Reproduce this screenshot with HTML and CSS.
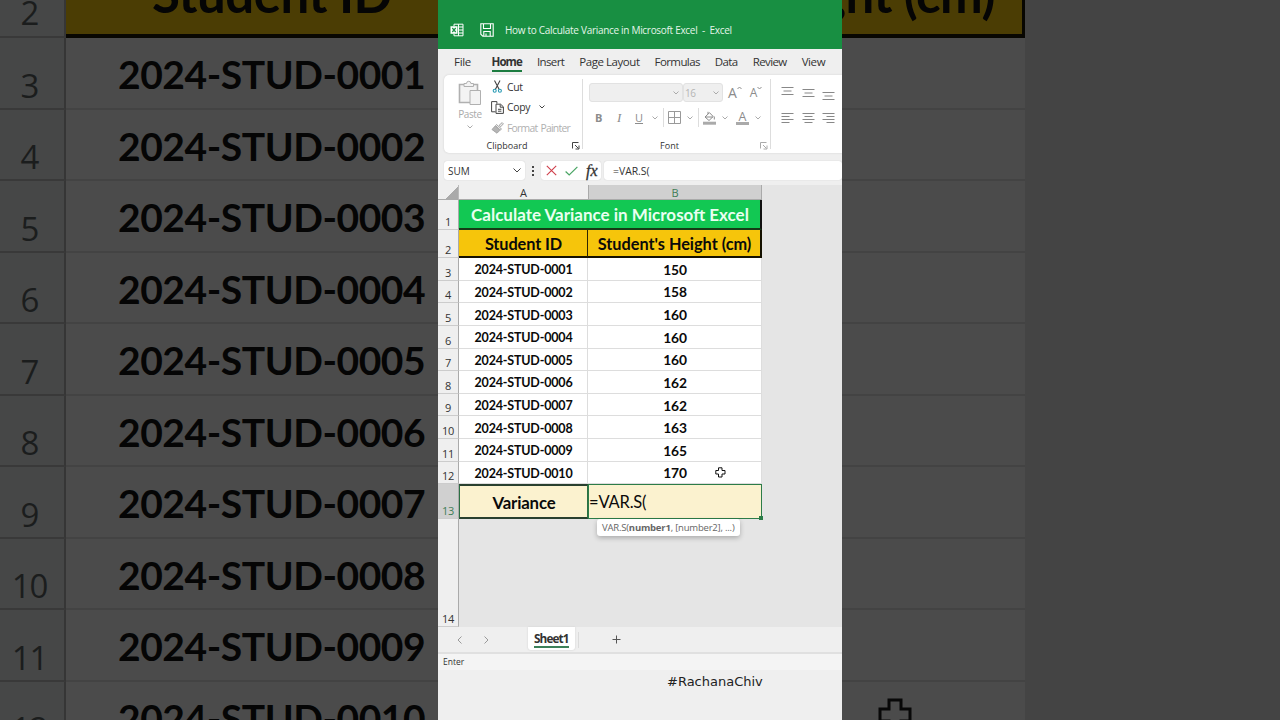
FILE: index.html
```
<!DOCTYPE html>
<html lang="en">
<head>
    <meta charset="UTF-8">
    <meta name="viewport" content="width=device-width, initial-scale=1.0">
    <title>How to Calculate Variance in Microsoft Excel</title>
    <link rel="stylesheet" href="styles.css">
</head>
<body>
    <div class="stage">
        <!-- enlarged sheet, left side -->
        <div class="side side-left">
            <div class="big-num big-first">2</div><div class="big-cell big-head"><span>Student ID</span></div>
            <div class="big-num">3</div><div class="big-cell">2024-STUD-0001</div>
            <div class="big-num">4</div><div class="big-cell">2024-STUD-0002</div>
            <div class="big-num">5</div><div class="big-cell">2024-STUD-0003</div>
            <div class="big-num">6</div><div class="big-cell">2024-STUD-0004</div>
            <div class="big-num">7</div><div class="big-cell">2024-STUD-0005</div>
            <div class="big-num">8</div><div class="big-cell">2024-STUD-0006</div>
            <div class="big-num">9</div><div class="big-cell">2024-STUD-0007</div>
            <div class="big-num">10</div><div class="big-cell">2024-STUD-0008</div>
            <div class="big-num">11</div><div class="big-cell">2024-STUD-0009</div>
            <div class="big-num">12</div><div class="big-cell">2024-STUD-0010</div>
        </div>

        <main class="phone">
            <header class="titlebar">
                <svg class="ico-excel" width="14" height="14" viewBox="0 0 14 14" fill="none" stroke="#fff">
                    <path d="M4 3V1.2h9v11.6H4V11M8.500 1.200v11.600M8.500 4h4.500M8.500 7h4.500M8.500 10h4.500"/>
                    <path d="M.5 3.200h7v7.600h-7z" fill="#fff" stroke="none"/>
                    <path d="M2.300 5l3.400 4M5.700 5L2.300 9" stroke="#188f42" stroke-width="1.200"/>
                </svg>
                <svg class="ico-save" width="14" height="14" viewBox="0 0 14 14" fill="none" stroke="#fff" stroke-width="1.100">
                    <path d="M.8.800h12.400v12.400H2.800l-2-2zM3.500.800v4.700h7V.800M3.800 13V8.500h6.400V13M6 10.500V13"/>
                </svg>
                <span class="doc-name">How to Calculate Variance in Microsoft Excel&nbsp; -&nbsp; Excel</span>
            </header>

            <nav class="menu">
                <span class="m-file">File</span>
                <span class="m-home active">Home</span>
                <span class="m-insert">Insert</span>
                <span class="m-layout">Page Layout</span>
                <span class="m-formulas">Formulas</span>
                <span class="m-data">Data</span>
                <span class="m-review">Review</span>
                <span class="m-view">View</span>
            </nav>

            <section class="ribbon">
                <div class="group clipboard">
                    <div class="group-body">
                        <div class="paste">
                            <svg width="24" height="26" viewBox="0 0 24 26" fill="#f3f3f3" stroke="#b0b0b0">
                                <path d="M1.500 4.500h18v18h-18z" stroke-width="1.600"/>
                                <path d="M6 6.500V3.500h2.500a2.200 2.200 0 0 1 4.400 0h2.600v3z"/>
                                <path d="M12 10.500h10.500v14H12z"/>
                            </svg>
                            <span>Paste</span>
                            <svg class="chev" width="6" height="4" viewBox="0 0 6 4"><path d="M.5.500L3 3 5.500.500"/></svg>
                        </div>
                        <div class="clip-list">
                            <div class="clip-row">
                                <svg width="13" height="13" viewBox="0 0 13 13" fill="none">
                                    <path d="M3.500.500l4.700 9M9 .500L4.300 9.500" stroke="#444" stroke-width="1.100"/>
                                    <circle cx="3.700" cy="10.800" r="1.500" stroke="#2a9bb5" stroke-width="1.100"/>
                                    <circle cx="8.900" cy="10.800" r="1.500" stroke="#2a9bb5" stroke-width="1.100"/>
                                </svg>
                                <span>Cut</span>
                            </div>
                            <div class="clip-row">
                                <svg width="13" height="13" viewBox="0 0 13 13" fill="none" stroke="#444">
                                    <path d="M4.500 10.800H.6V.600h5.300v2"/>
                                    <path d="M5 3.200h4.600l2.800 2.600v6.600H5zM9.200 3.500v2.700h3M7 8.300h3.400M7 10.200h3.400"/>
                                </svg>
                                <span>Copy</span>
                                <svg class="chev dark" width="6" height="4" viewBox="0 0 6 4"><path d="M.5.500L3 3 5.500.500"/></svg>
                            </div>
                            <div class="clip-row off">
                                <svg width="13" height="12" viewBox="0 0 13 12" fill="#b5b5b5" stroke="#a5a5a5">
                                    <path d="M8.200 3.200L11.200.600l1.200 1.200-2.800 3z" fill="#eee"/>
                                    <path d="M5.500 2.500l5 4.500-1.300 1-4.700-4.400z" fill="#eee"/>
                                    <path d="M4.200 4l4.700 4.300L6 11.200 1 7.500z"/>
                                </svg>
                                <span>Format Painter</span>
                            </div>
                        </div>
                    </div>
                    <div class="group-name">Clipboard
                        <svg class="launcher" width="8" height="8" viewBox="0 0 8 8"><path d="M.5 6.500v-6h6M3 3l3.500 3.500M7 3.500V7H3.500"/></svg>
                    </div>
                </div>

                <div class="group font">
                    <div class="font-row">
                        <span class="combo name"><svg class="chev" width="6" height="4" viewBox="0 0 6 4"><path d="M.5.500L3 3 5.500.500"/></svg></span>
                        <span class="combo size">16<svg class="chev" width="6" height="4" viewBox="0 0 6 4"><path d="M.5.500L3 3 5.500.500"/></svg></span>
                        <span class="grow">A<svg width="5" height="4" viewBox="0 0 5 4"><path d="M.5 3L2.500 1l2 2"/></svg></span>
                        <span class="grow shrink">A<svg width="5" height="4" viewBox="0 0 5 4"><path d="M.5 1l2 2 2-2"/></svg></span>
                    </div>
                    <div class="font-row tools">
                        <b>B</b><i>I</i><u>U</u>
                        <svg class="chev" width="6" height="4" viewBox="0 0 6 4"><path d="M.5.500L3 3 5.500.500"/></svg>
                        <span class="sep"></span>
                        <svg class="borders" width="13" height="13" viewBox="0 0 13 13" fill="none" stroke="#999"><path d="M.5.500h12v12H.5zM6.500.500v12M.5 6.500h12"/></svg>
                        <svg class="chev" width="6" height="4" viewBox="0 0 6 4"><path d="M.5.500L3 3 5.500.500"/></svg>
                        <span class="sep"></span>
                        <svg class="fill" width="13" height="14" viewBox="0 0 13 14" fill="none" stroke="#8c8c8c">
                            <path d="M2 6l4.500-4.300 3.700 3.800L6 9.500zM5 3V.800M2.500 6h7.300M11.300 5.500v3"/>
                            <path d="M0 12.200h13" stroke="#aaa" stroke-width="3"/>
                        </svg>
                        <svg class="chev" width="6" height="4" viewBox="0 0 6 4"><path d="M.5.500L3 3 5.500.500"/></svg>
                        <span class="font-color">A</span>
                        <svg class="chev" width="6" height="4" viewBox="0 0 6 4"><path d="M.5.500L3 3 5.500.500"/></svg>
                    </div>
                    <div class="group-name">Font
                        <svg class="launcher off" width="8" height="8" viewBox="0 0 8 8"><path d="M.5 6.500v-6h6M3 3l3.500 3.500M7 3.500V7H3.500"/></svg>
                    </div>
                </div>

                <div class="group align">
                    <svg width="13" height="14" viewBox="0 0 13 14"><path d="M.5 1.500h12M2.500 5h8M.5 8.500h12"/></svg>
                    <svg width="13" height="14" viewBox="0 0 13 14"><path d="M.5 3.500h12M2.500 7h8M.5 10.500h12"/></svg>
                    <svg width="13" height="14" viewBox="0 0 13 14"><path d="M.5 6.500h12M2.500 10h8M.5 13.500h12"/></svg>
                    <svg width="13" height="14" viewBox="0 0 13 14"><path d="M.5 1.500h12M.5 4.500h8M.5 7.500h12M.5 10.500h8"/></svg>
                    <svg width="13" height="14" viewBox="0 0 13 14"><path d="M.5 1.500h12M2.500 4.500h8M.5 7.500h12M2.500 10.500h8"/></svg>
                    <svg width="13" height="14" viewBox="0 0 13 14"><path d="M.5 1.500h12M4.500 4.500h8M.5 7.500h12M4.500 10.500h8"/></svg>
                </div>
            </section>

            <section class="formula-bar">
                <div class="name-box">SUM<svg class="chev dark" width="8" height="5" viewBox="0 0 8 5"><path d="M.5.500L4 4 7.500.500"/></svg></div>
                <div class="dots"><i></i><i></i><i></i></div>
                <div class="fx-box">
                    <svg width="11" height="11" viewBox="0 0 11 11" fill="none" stroke="#cf3f4b" stroke-width="1.100"><path d="M.8.800l9.400 9.400M10.200.800L.8 10.200"/></svg>
                    <svg width="13" height="10" viewBox="0 0 13 10" fill="none" stroke="#4aa564" stroke-width="1.200"><path d="M.6 5.500l3.600 3.500L12.400.800"/></svg>
                    <em>fx</em>
                </div>
                <div class="formula">=VAR.S(</div>
            </section>

            <section class="sheet">
                <div class="corner"></div><div class="col">A</div><div class="col selected">B</div>
                <div class="num">1</div><div class="cell title">Calculate Variance in Microsoft Excel</div>
                <div class="num">2</div><div class="cell head">Student ID</div><div class="cell head last">Student's Height (cm)</div>
                <div class="num">3</div><div class="cell">2024-STUD-0001</div><div class="cell val">150</div>
                <div class="num">4</div><div class="cell">2024-STUD-0002</div><div class="cell val">158</div>
                <div class="num">5</div><div class="cell">2024-STUD-0003</div><div class="cell val">160</div>
                <div class="num">6</div><div class="cell">2024-STUD-0004</div><div class="cell val">160</div>
                <div class="num">7</div><div class="cell">2024-STUD-0005</div><div class="cell val">160</div>
                <div class="num">8</div><div class="cell">2024-STUD-0006</div><div class="cell val">162</div>
                <div class="num">9</div><div class="cell">2024-STUD-0007</div><div class="cell val">162</div>
                <div class="num">10</div><div class="cell">2024-STUD-0008</div><div class="cell val">163</div>
                <div class="num">11</div><div class="cell">2024-STUD-0009</div><div class="cell val">165</div>
                <div class="num">12</div><div class="cell">2024-STUD-0010</div><div class="cell val">170
                    <svg class="cursor" width="11" height="11" viewBox="0 0 11 11"><path d="M3.500.800h3.500v2.700h3v3.500H7v3H3.500V7H.8V3.500h2.700z"/></svg>
                </div>
                <div class="num selected">13</div><div class="cell variance">Variance</div>
                <div class="cell editing">=VAR.S(
                    <div class="hint">VAR.S(<b>number1</b>, [number2], ...)</div>
                </div>
                <div class="num">14</div>
            </section>

            <footer class="tabs">
                <svg class="arrow" width="5" height="8" viewBox="0 0 5 8"><path d="M4.500.500L1 4l3.500 3.500"/></svg>
                <svg class="arrow" width="5" height="8" viewBox="0 0 5 8"><path d="M.5.500L4 4 .5 7.500"/></svg>
                <div class="tab"><span>Sheet1</span></div>
                <div class="tab-sep"></div>
                <svg class="plus" width="9" height="9" viewBox="0 0 9 9"><path d="M4.500.500v8M.5 4.500h8"/></svg>
            </footer>
            <div class="status">Enter</div>
            <div class="tag">#RachanaChiv</div>
        </main>

        <!-- enlarged sheet, right side -->
        <div class="side side-right">
            <div class="big-cell big-head"><span>Height (cm)</span></div>
            <div class="big-cell"></div>
            <div class="big-cell"></div>
            <div class="big-cell"></div>
            <div class="big-cell"></div>
            <div class="big-cell"></div>
            <div class="big-cell"></div>
            <div class="big-cell"></div>
            <div class="big-cell"></div>
            <div class="big-cell"></div>
            <div class="big-cell">
                <svg class="big-cursor" width="34" height="34" viewBox="0 0 34 34"><path d="M11 2h12v9h9v12h-9v9H11v-9H2V11h9z"/></svg>
            </div>
        </div>
    </div>
</body>
</html>
```
FILE: styles.css
```
* {
    box-sizing: border-box;
}
body {
    margin: 0;
    background: #454545;
    font-family: "Open Sans", "Noto Sans", sans-serif;
}
svg {
    display: block;
    flex-shrink: 0;
}
.stage {
    display: flex;
    width: 1280px;
    height: 720px;
    overflow: hidden;
}

/* dimmed sides */
.side {
    width: 438px;
    height: 720px;
    overflow: hidden;
    display: grid;
    grid-template-rows: 38px repeat(10, 71.5px);
    font-family: Lato, sans-serif;
    color: #050505;
}
.side-left {
    grid-template-columns: 66px 372px;
}
.side-right {
    grid-template-columns: 183px;
    background: #444;
}
.big-num {
    display: flex;
    align-items: flex-end;
    justify-content: center;
    padding: 0 5px 2px 0;
    overflow: hidden;
    background: #464747;
    border-right: 2px solid #363636;
    border-bottom: 2px solid #393939;
    color: #1b1d1d;
    font-family: "Open Sans", sans-serif;
    font-size: 33px;
    line-height: 40px;
    letter-spacing: -1px;
}
.big-num.big-first {
    padding-bottom: 3px;
}
.big-cell {
    display: flex;
    align-items: center;
    padding: 3px 0 0 52px;
    overflow: hidden;
    background: #4b4b4b;
    border-bottom: 2px solid #434343;
    font-size: 39px;
    font-weight: bold;
    letter-spacing: -0.45px;
    white-space: nowrap;
}
.big-cell.big-head {
    align-items: flex-end;
    padding: 0 0 18px 86px;
    background: #4b3d04;
    border-bottom: 4px solid #080702;
    font-size: 51px;
    line-height: 44px;
}
.side-right .big-head {
    justify-content: flex-end;
    padding: 0 27px 18px 0;
    border-right: 3px solid #080702;
}
.side-right .big-cell:last-child {
    align-items: flex-start;
    padding: 16px 0 0 36px;
}
.big-cursor path {
    fill: #4b4b4b;
    stroke: #080808;
    stroke-width: 3;
}

.phone {
    width: 404px;
    height: 720px;
    display: flex;
    flex-direction: column;
    overflow: hidden;
    background: #efefef;
    color: #333;
}
.titlebar {
    height: 49px;
    display: flex;
    align-items: center;
    padding: 11px 0 0 12px;
    background: #188f42;
    color: #e4f5e9;
    font-size: 10px;
}
.ico-save {
    margin: 0 11px 0 16px;
}
.doc-name {
    letter-spacing: -0.3px;
    white-space: nowrap;
}
.menu {
    height: 26px;
    display: flex;
    align-items: flex-start;
    gap: 15px;
    padding: 3px 0 0 16px;
    font-size: 11.5px;
    line-height: 19px;
    letter-spacing: -0.6px;
    white-space: nowrap;
}
.menu .m-file {
    margin-right: 5.5px;
    letter-spacing: -0.3px;
}
.menu .active {
    height: 20px;
    border-bottom: 2px solid #1c7c40;
    font-weight: bold;
    letter-spacing: -0.9px;
}
.menu .m-layout {
    letter-spacing: -0.45px;
}
.menu .m-view {
    letter-spacing: -0.4px;
}

/* ribbon */
.ribbon {
    height: 78px;
    display: flex;
    margin-left: 6px;
    background: #fff;
    border-radius: 5px 0 0 5px;
    box-shadow: 0 0 2px #ccc;
}
.group {
    position: relative;
    height: 78px;
    flex-shrink: 0;
}
.clipboard {
    width: 139px;
}
.font {
    width: 188px;
}
.clipboard::after,
.font::after {
    content: "";
    position: absolute;
    top: 4px;
    right: 0;
    width: 1px;
    height: 70px;
    background: #ddd;
}
.chev {
    fill: none;
    stroke: #aaa;
}
.chev.dark {
    stroke: #444;
}
.group-body {
    height: 64px;
    display: flex;
}
.paste {
    width: 32px;
    display: flex;
    flex-direction: column;
    align-items: center;
    margin-left: 10px;
    padding-top: 5px;
    color: #aaa;
    font-size: 10px;
    line-height: 16px;
    letter-spacing: -0.4px;
}
.paste .chev {
    margin-top: 3px;
}
.clip-list {
    margin-left: 5px;
    padding-top: 1.5px;
    font-size: 10.4px;
    letter-spacing: -0.3px;
    white-space: nowrap;
}
.clip-row {
    height: 20.5px;
    display: flex;
    align-items: center;
    gap: 3px;
}
.clip-row .chev {
    margin-left: 6px;
}
.clip-row.off {
    color: #b0b0b0;
    letter-spacing: -0.75px;
    word-spacing: 1px;
}
.group-name {
    display: flex;
    justify-content: center;
    color: #333;
    font-size: 9px;
    line-height: 14px;
    padding-right: 13px;
}
.font .group-name {
    padding-right: 15px;
}
.launcher {
    position: absolute;
    right: 3px;
    bottom: 3px;
    fill: none;
    stroke: #444;
}
.launcher.off {
    stroke: #aaa;
}
.font-row {
    height: 27px;
    display: flex;
    align-items: center;
    padding: 8px 0 0 6px;
    color: #8c8c8c;
}
.combo {
    height: 19px;
    display: flex;
    align-items: center;
    justify-content: flex-end;
    padding: 0 3px;
    background: #efefef;
    border: 1px solid #e2e2e2;
    border-radius: 3px;
}
.combo.name {
    width: 94px;
}
.combo.size {
    width: 40px;
    padding-left: 1px;
    justify-content: space-between;
    color: #b5b5b5;
    font-size: 10px;
    letter-spacing: -0.4px;
}
.grow {
    display: flex;
    margin-left: 5px;
    font-size: 14px;
    line-height: 16px;
}
.grow.shrink {
    margin-left: 8px;
    font-size: 12px;
}
.grow svg {
    margin-top: 1px;
    fill: none;
    stroke: #8c8c8c;
}
.font-row.tools {
    height: 37px;
    padding: 0 0 6px 12px;
    font-size: 11px;
}
.tools b {
    width: 20px;
}
.tools i {
    width: 20px;
    padding-left: 2px;
    font-family: "Liberation Serif", serif;
    font-size: 13px;
}
.tools u {
    width: 17px;
}
.sep {
    width: 1px;
    height: 19px;
    margin-left: 5px;
    background: #ddd;
}
.borders {
    margin: 0 6px 0 4px;
}
.fill {
    margin: 0 6px 0 4px;
}
.font-color {
    width: 13px;
    height: 14px;
    margin: 0 6px 0 8px;
    border-bottom: 3px solid #aaa;
    font-size: 12.5px;
    line-height: 11px;
    text-align: center;
}
.align {
    display: grid;
    grid-template-columns: repeat(3, 13px);
    grid-template-rows: 14px 14px;
    gap: 12px 7.5px;
    padding: 11px 0 0 10px;
}
.align path {
    stroke: #888;
}

/* formula bar */
.formula-bar {
    height: 32px;
    display: flex;
    align-items: center;
    padding: 3px 0 0 6px;
    font-size: 10px;
}
.name-box,
.fx-box,
.formula {
    height: 19px;
    display: flex;
    align-items: center;
    background: #fff;
    border-radius: 3px;
    box-shadow: 0 0 1px #bbb;
}
.name-box {
    width: 81px;
    justify-content: space-between;
    padding: 0 4px;
}
.dots {
    width: 16px;
    display: flex;
    flex-direction: column;
    align-items: center;
    gap: 2px;
}
.dots i {
    width: 2px;
    height: 2px;
    background: #444;
}
.fx-box {
    width: 60px;
    gap: 8px;
    padding-left: 5px;
}
.fx-box em {
    font-family: "Liberation Serif", serif;
    font-size: 16px;
    line-height: 15px;
    -webkit-text-stroke: 0.3px #333;
}
.formula {
    flex: 1;
    margin-left: 3px;
    padding-left: 9px;
    font-size: 10.4px;
}

/* sheet */
.sheet {
    height: 442px;
    display: grid;
    grid-template-columns: 21px 129px 174px;
    grid-template-rows: 15px 30px 28px repeat(10, 22.63px) 35px 107.7px;
    background: #e5e5e5;
    color: #0a0a0a;
    font-family: Lato, sans-serif;
}
.corner,
.col {
    display: flex;
    align-items: center;
    justify-content: center;
    padding-top: 2px;
    background: #efefef;
    border-bottom: 1px solid #aaa;
    color: #333;
    font-family: "Open Sans", sans-serif;
    font-size: 11px;
    line-height: 14px;
}
.corner {
    border-right: 1px solid #bbb;
    background: linear-gradient(135deg, #efefef 62%, #aaa 63%);
}
.col.selected,
.num.selected {
    background: #d0d0d0;
    color: #3f7d56;
}
.sheet .col.selected {
    border-right: 1px solid #aaa;
    border-left: 1px solid #aaa;
}
.num {
    display: flex;
    align-items: flex-end;
    justify-content: center;
    background: #efefef;
    border-right: 1px solid #aaa;
    border-bottom: 1px solid #ccc;
    color: #333;
    font-family: "Open Sans", sans-serif;
    font-size: 11px;
    line-height: 14px;
    letter-spacing: -0.3px;
}
.cell {
    position: relative;
    display: flex;
    align-items: center;
    justify-content: center;
    padding: 2px 0 0 1px;
    background: #fff;
    border-right: 1px solid #ddd;
    border-bottom: 1px solid #ddd;
    font-size: 12.5px;
    font-weight: bold;
    letter-spacing: -0.18px;
    white-space: nowrap;
}
.cell.val {
    padding-top: 1px;
    font-size: 13.8px;
}
.cell.title {
    grid-column: span 2;
    padding-top: 1px;
    background: #12c853;
    border-right: 2px solid #111;
    border-bottom: 2px solid #153b16;
    color: #e9fff0;
    font-size: 17px;
    letter-spacing: 0;
}
.cell.head {
    padding-top: 1px;
    background: #f6c50b;
    border-right: 1px solid #302600;
    border-bottom: 2px solid #151100;
    font-size: 16.3px;
    letter-spacing: -0.08px;
}
.cell.head.last {
    border-right: 2px solid #151100;
    letter-spacing: 0;
}
.cell.variance {
    padding-top: 1px;
    background: #fbf2cf;
    border: 1px solid #2c7044;
    border-top: 2px solid #29402f;
    border-bottom: 2px solid #29402f;
    font-size: 16.8px;
}
.cell.editing {
    padding: 0;
    justify-content: flex-start;
    background: #fbf2cf;
    border: 1px solid #2c7c48;
    font-size: 16.5px;
    font-weight: normal;
}
.cell.editing::after {
    content: "";
    position: absolute;
    right: -2px;
    bottom: -2px;
    width: 4px;
    height: 4px;
    background: #2c7c48;
}
.hint {
    position: absolute;
    left: 8px;
    top: 34px;
    height: 17px;
    padding: 0 5px;
    background: #fff;
    border-radius: 3px;
    box-shadow: 0 2px 5px rgba(0,0,0,0.25);
    color: #666;
    font-family: "Open Sans", sans-serif;
    font-size: 9.5px;
    line-height: 17px;
    letter-spacing: -0.2px;
}
.cursor {
    position: absolute;
    left: 127px;
    top: 5px;
}
.cursor path {
    fill: #fff;
    stroke: #111;
}

/* bottom */
.tabs {
    height: 27px;
    display: flex;
    align-items: center;
    padding-left: 19px;
    border-bottom: 2px solid #e0e0e0;
}
.arrow {
    margin-right: 22px;
    fill: none;
    stroke: #999;
}
.tab {
    width: 47px;
    height: 23px;
    align-self: flex-start;
    margin-left: 17px;
    padding: 4px 6px 0;
    background: #fff;
    border-radius: 0 0 3px 3px;
    box-shadow: 0 0 2px #ccc;
    font-size: 11.8px;
    font-weight: bold;
    line-height: 15px;
    letter-spacing: -0.9px;
}
.tab span {
    display: block;
    border-bottom: 2px solid #3c8059;
}
.tab-sep {
    width: 1px;
    height: 16px;
    margin-left: 3px;
    background: #dcdcdc;
}
.plus {
    margin-left: 33px;
    fill: none;
    stroke: #555;
}
.status {
    height: 16px;
    padding-left: 5px;
    background: #f4f4f4;
    font-size: 8.5px;
    line-height: 16px;
}
.tag {
    padding: 3px 0 0 229px;
    color: #222;
    font-family: "DejaVu Sans", sans-serif;
    font-size: 13px;
    line-height: 18px;
}
```
